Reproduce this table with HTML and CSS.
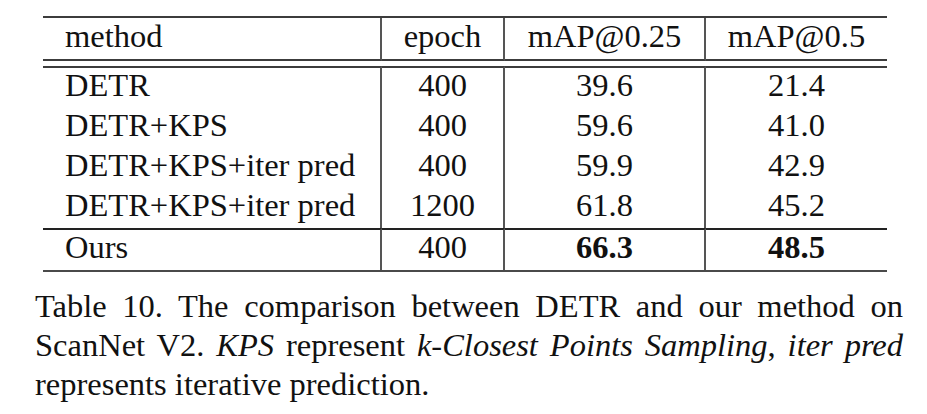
FILE: index.html
```html
<!DOCTYPE html>
<html lang="en">
<head>
    <meta charset="UTF-8">
    <meta name="viewport" content="width=device-width, initial-scale=1.0">
    <title>Table 10</title>
    <link rel="stylesheet" href="styles.css">
</head>
<body>
    <div class="figure">
        <table class="results">
            <colgroup>
                <col class="col-method">
                <col class="col-epoch">
                <col class="col-map25">
                <col class="col-map50">
            </colgroup>
            <thead>
                <tr>
                    <th class="name">method</th>
                    <th>epoch</th>
                    <th>mAP@0.25</th>
                    <th>mAP@0.5</th>
                </tr>
            </thead>
            <tbody>
                <!-- empty row makes the double rule under the header -->
                <tr class="gap"><td colspan="4"></td></tr>
                <tr class="first">
                    <td class="name">DETR</td>
                    <td>400</td>
                    <td>39.6</td>
                    <td>21.4</td>
                </tr>
                <tr>
                    <td class="name">DETR+KPS</td>
                    <td>400</td>
                    <td>59.6</td>
                    <td>41.0</td>
                </tr>
                <tr>
                    <td class="name">DETR+KPS+iter pred</td>
                    <td>400</td>
                    <td>59.9</td>
                    <td>42.9</td>
                </tr>
                <tr>
                    <td class="name">DETR+KPS+iter pred</td>
                    <td>1200</td>
                    <td>61.8</td>
                    <td>45.2</td>
                </tr>
                <tr class="ours">
                    <td class="name">Ours</td>
                    <td>400</td>
                    <td class="best">66.3</td>
                    <td class="best">48.5</td>
                </tr>
            </tbody>
        </table>
        <p class="caption">Table 10. The comparison between DETR and our method on ScanNet V2. <em>KPS</em> represent <em>k-Closest Points Sampling</em>, <em>iter pred</em> represents iterative prediction.</p>
    </div>
</body>
</html>
```

FILE: styles.css
```css
* { margin: 0; padding: 0; box-sizing: border-box; }
body { background: #fff; color: #111; font-family: "Liberation Serif", "Times New Roman", serif; font-size: 32.5px; }
.figure { width: 868px; margin-left: 35px; padding-top: 16px; }

.results { width: 844px; margin-left: 8px; border-collapse: separate; border-spacing: 0; table-layout: fixed; border-top: 2px solid #3c3c3c; border-bottom: 2px solid #4a4a4a; }
.col-method { width: 339px; }
.col-epoch { width: 123px; }
.col-map25 { width: 201px; }
.col-map50 { width: 181px; }
.results th, .results td { font-weight: normal; text-align: center; white-space: nowrap; line-height: 34px; padding: 0 0 6px; border-right: 2px solid #555; }
.results th:last-child, .results td:last-child { border-right: none; }
.results th { line-height: 36px; padding-bottom: 5px; border-bottom: 2px solid #3c3c3c; }
.results .name { text-align: left; padding-left: 22px; }
.results .gap td { height: 5px; padding: 0; line-height: 0; border: none; }
.results .first td { border-top: 2px solid #3c3c3c; }
.results .ours td { border-top: 2px solid #222; }
.results td.best { font-weight: bold; }

.caption { margin-top: 15px; text-align: justify; line-height: 39px; }
```
